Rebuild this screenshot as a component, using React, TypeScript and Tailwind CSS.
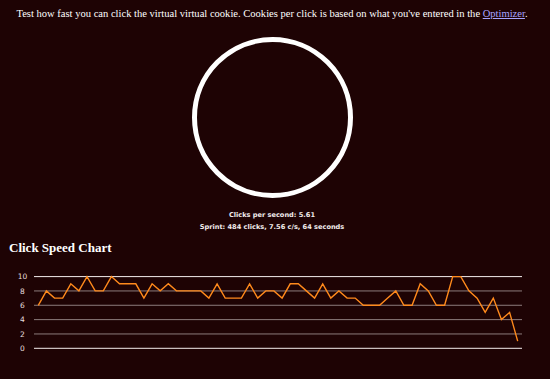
const clicks = [
  6, 8, 7, 7, 9, 8, 10, 8, 8, 10,
  9, 9, 9, 7, 9, 8, 9, 8, 8, 8,
  8, 7, 9, 7, 7, 7, 9, 7, 8, 8,
  7, 9, 9, 8, 7, 9, 7, 8, 7, 7,
  6, 6, 6, 7, 8, 6, 6, 9, 8, 6,
  6, 10, 10, 8, 7, 5, 7, 4, 5, 1,
];

const ticks = [10, 8, 6, 4, 2, 0];

// chart is drawn in page coordinates (viewBox starts at y=262)
const yOf = (v: number) => 348.3 - 7.17 * v;
const xOf = (i: number) => 38.3 + 8.125 * i;

function SpeedChart() {
  const points = clicks.map((v, i) => `${xOf(i).toFixed(1)},${yOf(v).toFixed(1)}`).join(" ");
  return (
    <svg width="550" height="117" viewBox="0 262 550 117" className="block">
      {ticks.map((t) => (
        <g key={t}>
          <line
            x1="34"
            x2="522"
            y1={yOf(t)}
            y2={yOf(t)}
            stroke={t === 10 || t === 0 ? "#f4eeee" : "#8c7c7c"}
            strokeWidth="1"
          />
          <text
            x="22.5"
            y={yOf(t) + 2.6}
            textAnchor="middle"
            fill="#e6dede"
            fontSize="7.5"
            fontFamily="'DejaVu Sans', sans-serif"
          >
            {t}
          </text>
        </g>
      ))}
      <polyline points={points} fill="none" stroke="#ff8a1c" strokeWidth="1.4" strokeLinejoin="miter" />
    </svg>
  );
}

export default function App() {
  return (
    <div className="w-[550px] h-[379px] overflow-hidden bg-[#1e0304] text-white">
      <div className="w-[544px] text-center">
        <p className="pt-[8px] text-[10.55px] leading-[12px] font-['Liberation_Serif',serif]">
          Test how fast you can click the virtual virtual cookie. Cookies per click is based on what you've entered in the{" "}
          <a href="#" className="text-[#a8a4ff] underline">
            Optimizer
          </a>
          .
        </p>
        <div className="mt-[17px] mx-auto w-[161px] h-[161px] rounded-full border-[5px] border-white" />
        <div className="mt-[11px] text-[6.6px] leading-[12px] font-bold font-['DejaVu_Sans',sans-serif] text-[#f2ecec]">
          <div>Clicks per second: 5.61</div>
          <div>Sprint: 484 clicks, 7.56 c/s, 64 seconds</div>
        </div>
      </div>
      <h2 className="mt-[7px] pl-[9px] text-[13px] leading-[16px] font-bold font-['Liberation_Serif',serif]">
        Click Speed Chart
      </h2>
      <div className="mt-[6px]">
        <SpeedChart />
      </div>
    </div>
  );
}
